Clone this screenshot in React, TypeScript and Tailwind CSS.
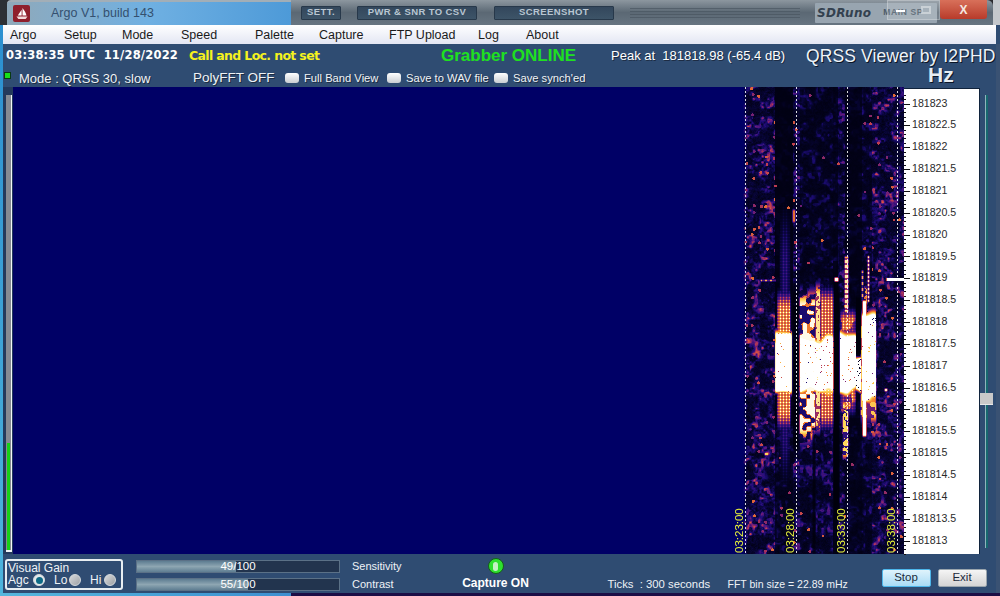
import React, { useEffect, useRef } from "react";

const W = 162;
const H = 467;
const X0 = 742;
const Y0 = 87;

function hash(a: number, b: number) {
  const s = Math.sin(a * 127.1 + b * 311.7) * 43758.5453;
  return s - Math.floor(s);
}
function vnoise(x: number, y: number, c: number, seed: number) {
  const fx = x / c, fy = y / c;
  const ix = Math.floor(fx), iy = Math.floor(fy);
  const tx = fx - ix, ty = fy - iy;
  const sx = tx * tx * (3 - 2 * tx), sy = ty * ty * (3 - 2 * ty);
  const a = hash(ix + seed, iy), b = hash(ix + 1 + seed, iy);
  const d = hash(ix + seed, iy + 1), e = hash(ix + 1 + seed, iy + 1);
  return (a + (b - a) * sx) * (1 - sy) + (d + (e - d) * sx) * sy;
}
function ss(e0: number, e1: number, v: number) {
  const t = Math.max(0, Math.min(1, (v - e0) / (e1 - e0)));
  return t * t * (3 - 2 * t);
}
function box(x: number, y: number, x0: number, x1: number, y0: number, y1: number, ex: number, ey: number) {
  return ss(x0 - ex, x0 + ex, x) * (1 - ss(x1 - ex, x1 + ex, x)) * ss(y0 - ey, y0 + ey, y) * (1 - ss(y1 - ey, y1 + ey, y));
}
const STOPS: [number, number, number, number][] = [
  [0, 0, 0, 12],
  [0.1, 6, 4, 50],
  [0.24, 30, 12, 120],
  [0.4, 95, 24, 125],
  [0.55, 190, 60, 80],
  [0.7, 245, 130, 40],
  [0.85, 255, 215, 90],
  [1, 255, 255, 255],
];
function cmap(v: number): [number, number, number] {
  const t = Math.max(0, Math.min(1, v));
  for (let i = 1; i < STOPS.length; i++) {
    if (t <= STOPS[i][0]) {
      const a = STOPS[i - 1], b = STOPS[i];
      const k = (t - a[0]) / (b[0] - a[0]);
      return [a[1] + (b[1] - a[1]) * k, a[2] + (b[2] - a[2]) * k, a[3] + (b[3] - a[3]) * k];
    }
  }
  return [255, 255, 255];
}
function bandBase(x: number, y: number) {
  const low = y > 425 ? 1.7 : 1;
  if (x < 775) return 0.62;
  if (x < 793) return y > 425 ? 0.22 : 0.06;
  if (x < 800) return 0.5;
  if (x < 833) return 0.24 * low;
  if (x < 838) return y > 260 ? 0.04 : 0.16;
  if (x < 845) return 0.45;
  if (x < 850) return 0.14 * low;
  if (x < 862) return 0.1 * low;
  if (x < 872) return 0.32;
  return 0.62;
}
function intensity(x: number, y: number) {
  const n1 = vnoise(x, y, 2, 11);
  const n2 = vnoise(x, y, 3, 47);
  const n3 = hash(x, y);
  const base = bandBase(x, y);
  const cluster = ss(0.3, 0.72, vnoise(x, y, 7, 63));
  let v = 0.015 + base * (0.08 * n3 + 0.12 * n1 + cluster * (0.3 * n1 + 0.5 * ss(0.5, 0.8, n2)));
  const cx = Math.floor(x / 7), cy = Math.floor(y / 7);
  const h = hash(cx + 3, cy + 5);
  if (h > 1 - base * 0.26) {
    const dx = x - (cx * 7 + 2 + hash(cx, cy + 9) * 3), dy = y - (cy * 7 + 2 + hash(cx + 8, cy) * 3);
    if (dx * dx + dy * dy < 2.2) v = Math.max(v, 0.42 + 0.24 * hash(cx + 1, cy + 1));
  }
  const lat = (x % 3 === 0 ? 1 : 0.55) * (y % 3 === 0 ? 1 : 0.6);
  const mott = vnoise(x, y, 4, 91);
  const mott2 = vnoise(x, y, 9, 23);
  const yj = y + (mott2 - 0.5) * 10;
  const hole = (p: number) => (n3 > p ? 1 : 0.05);

  // A
  v = Math.max(v, box(x, y, 780, 789, 225, 470, 3, 40) * 0.3 * (0.35 + lat * 0.8));
  v = Math.max(v, box(x, y, 777, 790, 296, 424, 1.5, 14) * 0.84 * (0.42 + lat * 0.85));
  v = Math.max(v, box(x, yj, 774.5, 791.5, 334, 392, 1, 6) * 1.12 * hole(0.015));

  // B
  const mo = mott > 0.58 ? 0.98 : mott > 0.46 ? 0.68 : 0.22;
  v = Math.max(v, box(x, y, 799, 815, 292, 440, 1, 14) * mo);
  v = Math.max(v, box(x, y, 815, 820, 285, 430, 1, 10) * (n1 > 0.35 ? 0.9 : 0.5));
  v = Math.max(v, box(x, y, 820, 833, 292, 425, 1, 12) * 0.8 * (0.38 + lat * 0.9));
  v = Math.max(v, box(x, yj, 799, 833, 336, 392, 1, 7) * 1.12 * hole(0.035));

  // C
  v = Math.max(v, box(x, y, 840, 855, 312, 412, 1.5, 9) * (mott2 > 0.45 ? 0.8 : 0.5) * (0.5 + lat * 0.7));
  v = Math.max(v, box(x, y, 844, 848, 256, 312, 0.7, 2) * (y % 5 < 3 ? 0.92 : 0.5));
  v = Math.max(v, box(x, y, 842, 848, 400, 458, 1, 6) * (n1 > 0.5 ? 0.85 : 0.28));
  v = Math.max(v, box(x, yj, 839, 855.5, 330, 392, 0.8, 6) * 1.12 * hole(0.02));
  v = Math.max(v, box(x, yj, 855, 861, 358, 392, 0.8, 3) * 1.12 * hole(0.05));

  // D
  v = Math.max(v, box(x, y, 860, 876, 320, 422, 1, 8) * (mott > 0.42 ? 0.82 : 0.42));
  v = Math.max(v, box(x, yj, 861, 875.5, 312, 402, 0.8, 6) * 1.12 * hole(0.025));
  v = Math.max(v, box(x, y, 862, 866, 300, 436, 0.6, 2) * 1.12);
  v = Math.max(v, box(x, y, 867, 869, 255, 302, 0.5, 2) * (y % 4 < 2 ? 0.95 : 0.5));
  v = Math.max(v, box(x, y, 861, 863, 270, 300, 0.5, 2) * (y % 6 < 3 ? 0.8 : 0.3));
  v = Math.max(v, box(x, y, 864, 867, 285, 304, 1, 2) * (n1 > 0.5 ? 0.75 : 0.3));

  // dark cuts
  v *= 1 - 0.97 * box(x, y, 833.5, 839, 280, 515, 0.5, 14);
  v *= 1 - 0.95 * box(x, y, 855.5, 860.5, 296, 354, 0.5, 2);
  v *= 1 - 0.92 * box(x, y, 792.5, 798, 290, 450, 0.6, 8);
  v *= 1 - 0.8 * box(x, y, 812, 815, 430, 554, 0.8, 8);

  // fixed features
  v = Math.max(v, box(x, y, 886, 904, 277.6, 280.4, 0.4, 0.4) * 1.2);
  v = Math.max(v, box(x, y, 834, 838, 277, 281, 1, 1) * 1.1);
  v = Math.max(v, box(x, y, 760, 775, 279, 281, 0.6, 0.6) * (x % 5 < 2 ? 0.8 : 0.4));
  v = Math.max(v, box(x, y, 792, 795, 209, 222, 1, 2) * 0.66);
  v = Math.max(v, box(x, y, 764, 768, 452, 455, 1, 1) * 0.85);
  v = Math.max(v, box(x, y, 884, 887, 388, 391, 1, 1) * 0.95);
  return v;
}

function Waterfall() {
  const ref = useRef<HTMLCanvasElement>(null);
  useEffect(() => {
    const c = ref.current;
    if (!c) return;
    const ctx = c.getContext("2d");
    if (!ctx) return;
    const img = ctx.createImageData(W, H);
    for (let py = 0; py < H; py++) {
      for (let px = 0; px < W; px++) {
        const x = px + X0, y = py + Y0;
        const [r, g, b] = cmap(intensity(x, y));
        const k = ss(0, 5, px);
        const i = (py * W + px) * 4;
        img.data[i] = r * k;
        img.data[i + 1] = g * k;
        img.data[i + 2] = b * k + 102 * (1 - k);
        img.data[i + 3] = 255;
      }
    }
    ctx.putImageData(img, 0, 0);
    ctx.fillStyle = "rgba(255,255,255,0.85)";
    for (const lx of [745, 796, 847, 897]) {
      for (let y = 0; y < H; y += 4) ctx.fillRect(lx - X0, y, 1, 2);
    }
  }, []);
  return <canvas ref={ref} width={W} height={H} className="block w-[162px] h-[467px]" />;
}

const LABELS = ["181823","181822.5","181822","181821.5","181821","181820.5","181820","181819.5","181819","181818.5","181818","181817.5","181817","181816.5","181816","181815.5","181815","181814.5","181814","181813.5","181813"];
const TIMES = [
  { t: "03:23:00", cls: "left-[729px]" },
  { t: "03:28:00", cls: "left-[780px]" },
  { t: "03:33:00", cls: "left-[831px]" },
  { t: "03:38:00", cls: "left-[881px]" },
];
const MENU: [string, string][] = [
  ["Argo", "w-[54px]"],["Setup", "w-[58px]"],["Mode", "w-[59px]"],["Speed", "w-[74px]"],["Palette", "w-[64px]"],["Capture", "w-[70px]"],["FTP Upload", "w-[89px]"],["Log", "w-[48px]"],["About", "w-[60px]"],
];

function TopButton({ label, w }: { label: string; w: string }) {
  return (
    <div className={`${w} h-[14px] flex items-center justify-center rounded-[1px] bg-gradient-to-b from-[#33475c] to-[#3d5468] border border-[#27384a] text-[9.5px] font-bold text-[#b9c6d2] tracking-[0.4px]`}>
      {label}
    </div>
  );
}
function Check({ label, w }: { label: string; w: string }) {
  return (
    <div className={`${w} flex items-center gap-[5px]`}>
      <span className="w-[14px] h-[10px] rounded-[3px] bg-gradient-to-b from-white to-[#c9cdd2]" />
      <span className="text-[11.2px] text-[#f0f3f6] [text-shadow:1px_1px_0_#1d2c44]">{label}</span>
    </div>
  );
}
function Radio({ on }: { on?: boolean }) {
  return (
    <span className={`w-[12px] h-[12px] rounded-full border border-[#d5dade] flex items-center justify-center ${on ? "bg-[#e3e8ea]" : "bg-gradient-to-br from-[#d8dadc] to-[#9da1a5]"}`}>
      {on && <span className="w-[7px] h-[7px] rounded-full bg-[#0d6a86]" />}
    </span>
  );
}
function Bar({ value, pct }: { value: string; pct: string }) {
  return (
    <div className="relative w-[204px] h-[13px] bg-[#22344e] border border-[#5b7187]">
      <div className={`h-full ${pct} bg-gradient-to-b from-[#5d7c91] via-[#8ea6b2] to-[#5f7e92]`} />
      <span className="absolute inset-0 flex items-center justify-center text-[11.5px] leading-none text-white">{value}</span>
    </div>
  );
}

export default function App() {
  return (
    <div className="relative w-[1000px] h-[596px] overflow-hidden bg-[#2f4c72] flex flex-col text-white [font-family:'Liberation_Sans',Arial,sans-serif]">
      {/* title bar */}
      <div className="h-[25px] shrink-0 flex items-stretch bg-[#2a2a2e]">
        <div className="w-[7px] bg-[#2c3034]" />
        <div className="w-[284px] flex items-center bg-gradient-to-r from-[#8fa9ba] via-[#6fb0e2] to-[#4d9ad8] border-t-2 border-[#a2aeb7] rounded-tl-[4px]">
          <div className="ml-[6px] w-[17px] h-[17px] rounded-[2px] bg-[#8f1f2c] flex items-center justify-center">
            <svg width="14" height="14" viewBox="0 0 14 14">
              <path d="M7.5 1 C9.5 3.5 11 6 11.5 8.5 L7.5 8.5 Z" fill="#fff" />
              <path d="M6.6 2.8 L6.6 8.5 L2.8 8.5 Z" fill="#fff" />
              <path d="M1.5 9.6 H12.5 L10.6 12 H3.4 Z" fill="#f3dcdc" />
            </svg>
          </div>
          <span className="ml-[21px] text-[12.5px] text-[#34506f]">Argo V1, build 143</span>
        </div>
        <div className="w-[702px] rounded-tr-[6px] flex items-center bg-gradient-to-b from-[#8d979f] via-[#5b6874] to-[#677581] relative">
          <div className="ml-[10px]"><TopButton label="SETT." w="w-[40px]" /></div>
          <div className="ml-[16px]"><TopButton label="PWR & SNR TO CSV" w="w-[120px]" /></div>
          <div className="ml-[17px]"><TopButton label="SCREENSHOT" w="w-[120px]" /></div>
          <div className="ml-[16px] w-[170px] h-[10px] flex flex-col justify-between opacity-60">
            <div className="h-px bg-[#46525d]" /><div className="h-px bg-[#46525d]" /><div className="h-px bg-[#46525d]" /><div className="h-px bg-[#46525d]" />
          </div>
          <div className="ml-[15px] w-[122px] h-[20px] bg-[#98a5b0] flex items-center pl-[2px] gap-[12px] rounded-[1px]">
            <span className="text-[12px] italic font-bold text-[#33414f] tracking-[0.3px] [font-family:'DejaVu_Sans',sans-serif]">SDRuno</span>
            <span className="text-[8.5px] font-bold text-[#4b5a68] tracking-[0.6px] whitespace-nowrap">MAIN SP</span>
          </div>
          <div className="absolute left-[596px] top-0 w-[53px] h-[20px] bg-white/15 border border-white/25 flex items-center justify-center gap-[16px]">
            <span className="w-[9px] h-[2px] bg-white mt-[1px]" />
            <span className="w-[10px] h-[8px] border-2 border-white/40" />
          </div>
          <div className="absolute left-[649px] top-0 w-[47px] h-[19px] rounded-b-[3px] bg-gradient-to-b from-[#d8705a] to-[#b83a2a] flex items-center justify-center text-[12px] font-bold text-[#f5e8e0]">
            X
          </div>
        </div>
        <div className="flex-1 bg-[#c4c8cc]" />
      </div>

      {/* menu */}
      <div className="h-[19px] shrink-0 ml-[3px] mr-[4px] pl-[7px] pt-[2px] flex items-center bg-gradient-to-b from-[#ffffff] to-[#e3e6f3] text-[12.5px] text-[#1a1a1a]">
        {MENU.map(([m, w]) => (
          <span key={m} className={w}>{m}</span>
        ))}
      </div>

      {/* body */}
      <div className="flex-1 min-h-0 ml-[3px] mr-[4px] flex flex-col bg-[#2f4c72]">
        <div className="h-[24px] shrink-0 flex items-center pl-[3px]">
          <span className="w-[183px] whitespace-pre text-[11.5px] font-bold text-white [font-family:'DejaVu_Sans',sans-serif] tracking-[0.2px]">03:38:35 UTC  11/28/2022</span>
          <span className="w-[252px] text-[12.5px] font-bold text-[#f5f21e] [font-family:'DejaVu_Sans',sans-serif] tracking-[-0.65px]">Call and Loc. not set</span>
          <span className="w-[170px] text-[17px] font-bold text-[#1fe01f]">Grabber ONLINE</span>
          <span className="w-[195px] whitespace-pre text-[13px] text-white [text-shadow:1px_1px_0_#1d2c44]">Peak at  181818.98 (-65.4 dB)</span>
          <span className="whitespace-nowrap text-[17.5px] leading-[18px] text-[#eef3f8] [text-shadow:1px_1px_0_#0b1526] tracking-[0.1px]">QRSS Viewer by I2PHD</span>
        </div>
        <div className="h-[19px] shrink-0 flex items-center relative pt-[2px]">
          <span className="ml-[1px] w-[7px] h-[7px] bg-[#18e018] border border-[#0a3a12] mb-[7px]" />
          <span className="ml-[8px] w-[174px] text-[13px] text-[#eef2f6] [text-shadow:1px_1px_0_#1d2c44]">Mode : QRSS 30, slow</span>
          <span className="w-[92px] text-[13.5px] text-[#eef2f6] [text-shadow:1px_1px_0_#1d2c44]">PolyFFT OFF</span>
          <Check label="Full Band View" w="w-[102px]" />
          <Check label="Save to WAV file" w="w-[107px]" />
          <Check label="Save synch'ed" w="w-[100px]" />
          <span className="absolute left-[925px] top-[-1px] text-[21px] leading-[16px] font-bold text-[#e7edf3] [text-shadow:1px_1px_0_#0b1526]">Hz</span>
        </div>

        <div className="h-[467px] shrink-0 flex items-stretch relative">
          <div className="w-[10px] flex justify-end pt-[8px] pb-[2px] pr-[1px] bg-[#243a5c]">
            <div className="w-[6px] bg-[#868a92] border-r-[1.5px] border-b-2 border-[#f2f5f7] flex flex-col justify-end">
              <div className="h-[107px] mx-[1px] bg-[#16d016]" />
            </div>
          </div>
          <div className="w-[891px] flex justify-end bg-[#000066]">
            <Waterfall />
          </div>
          {TIMES.map((t) => (
            <span key={t.t} className={`absolute ${t.cls} bottom-[1px] h-[42px] [writing-mode:vertical-rl] rotate-180 text-center text-[11.5px] leading-[14px] text-[#e6f03a]`}>
              {t.t}
            </span>
          ))}
          <div className="relative w-[76px] mt-[1px] bg-white border-t border-r border-[#10233c] text-[#222]">
            <svg className="absolute left-0 top-0" width="8" height="466">
              {Array.from({ length: 106 }).map((_, i) => {
                const y = 14.5 + i * 4.37 - 8.74;
                const major = (i - 2) % 5 === 0 && i >= 2;
                return y > 0 ? <rect key={i} x="0" y={Math.round(y)} width={major ? 6 : 2} height="1" fill="#111" /> : null;
              })}
            </svg>
            <div className="pl-[8px] pt-[3px] flex flex-col">
              {LABELS.map((l) => (
                <span key={l} className="h-[21.85px] flex items-center text-[10.6px] leading-none text-[#2a2a2a]">{l}</span>
              ))}
            </div>
          </div>
          <div className="relative w-[16px] flex">
            <div className="ml-[5px] mt-[8px] mb-[6px] w-[3px] bg-[#17686f] border-l border-[#8fb3bb]" />
            <div className="absolute left-0 top-[306px] w-[13px] h-[12px] bg-[#c9c9c9] border-b border-[#e8e8e8]" />
          </div>
        </div>

        <div className="flex-1 min-h-0 flex items-start relative">
          <div className="ml-[2px] mt-[5px] w-[118px] h-[31px] border-2 border-[#e8eef2] rounded-[3px] pl-[1px] pt-[1px] text-[12px] leading-[12px] text-[#eef2f6]">
            <div>Visual Gain</div>
            <div className="flex items-center">
              <span className="w-[25px]">Agc</span><Radio on />
              <span className="ml-[9px] w-[15px]">Lo</span><Radio />
              <span className="ml-[9px] w-[14px]">Hi</span><Radio />
            </div>
          </div>
          <div className="ml-[13px] mt-[6px] flex flex-col gap-[5px]">
            <Bar value="49/100" pct="w-[49%]" />
            <Bar value="55/100" pct="w-[55%]" />
          </div>
          <div className="ml-[12px] mt-[6px] flex flex-col gap-[5px] text-[11px] leading-[13px] text-[#eef2f6]">
            <span>Sensitivity</span>
            <span>Contrast</span>
          </div>
          <div className="ml-[59px] mt-[4px] w-[70px] flex flex-col items-center">
            <span className="w-[16px] h-[16px] rounded-full bg-[#2ee02e] border border-[#155c1a] flex items-center justify-center">
              <span className="w-[5px] h-[9px] rounded-full bg-[#c4f3c4]" />
            </span>
            <span className="whitespace-nowrap text-[12px] font-bold text-white">Capture ON</span>
          </div>
          <span className="ml-[77px] mt-[22px] w-[120px] whitespace-pre text-[11.3px] text-[#eef2f6]">Ticks  : 300 seconds</span>
          <span className="mt-[22px] w-[154px] text-[10.5px] leading-[17px] whitespace-nowrap text-[#eef2f6]">FFT bin size = 22.89 mHz</span>
          <div className="mt-[15px] flex gap-[7px]">
            <span className="w-[49px] h-[18px] rounded-[2px] bg-gradient-to-b from-[#dff3fc] to-[#a9dcf5] border border-[#4db6ea] flex items-center justify-center text-[11.5px] text-[#1b2a3a]">Stop</span>
            <span className="w-[49px] h-[18px] rounded-[2px] bg-gradient-to-b from-[#f5f5f5] to-[#d4d4d4] border border-[#9aa5ad] flex items-center justify-center text-[11.5px] text-[#1b2a3a]">Exit</span>
          </div>
        </div>
      </div>

      {/* desktop behind */}
      <div className="h-[3px] shrink-0 flex">
        <div className="w-[291px] bg-gradient-to-r from-[#57b7dd] to-[#3d8fd0]" />
        <div className="flex-1 bg-[#1c0d45]" />
      </div>
      <div className="absolute left-0 top-[25px] bottom-[3px] w-[3px] bg-gradient-to-b from-[#2b8fd0] to-[#4db4dc]" />
      <div className="absolute right-0 top-[44px] bottom-[3px] w-[4px] bg-[#3a5273]" />
    </div>
  );
}
